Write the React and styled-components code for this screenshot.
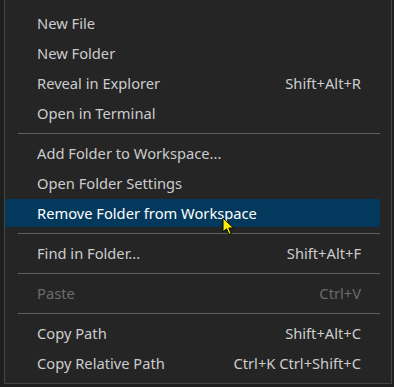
import React from "react";
import styled, { createGlobalStyle } from "styled-components";

const Global = createGlobalStyle`
  html, body { margin: 0; padding: 0; background: #1e1e1e; }
  body { width: 394px; height: 387px; overflow: hidden; }
`;

const Page = styled.div`
  position: relative;
  width: 394px;
  height: 387px;
  padding-left: 4px;
  box-sizing: border-box;
`;

const Menu = styled.div`
  width: 388px;
  height: 384px;
  box-sizing: border-box;
  background: #252526;
  border: 1px solid #454545;
  border-top: none;
  padding: 8px 11px 5px 0;
  font-family: "Noto Sans", sans-serif;
  font-size: 14.7px;
  color: #cccccc;
`;

const List = styled.ul`
  list-style: none;
  margin: 0;
  padding: 0;
  display: flex;
  flex-direction: column;
`;

const Item = styled.li`
  display: flex;
  align-items: center;
  justify-content: space-between;
  height: 28px;
  margin: 1px 0;
  padding: 0 19px 0 32px;
  background: ${(p) => (p.$active ? "#04395e" : "transparent")};
  color: ${(p) => (p.$disabled ? "#6b6b6b" : p.$active ? "#ffffff" : "#cccccc")};
  white-space: nowrap;
`;

const Shortcut = styled.span`
  color: inherit;
`;

const Separator = styled.li`
  height: 10px;
  display: flex;
  align-items: center;
  margin-left: 13px;
  &::after {
    content: "";
    flex: 1;
    height: 1px;
    background: #606060;
  }
`;

const Cursor = styled.svg`
  position: absolute;
  left: 222px;
  top: 217px;
`;

const groups = [
  [
    { label: "New File" },
    { label: "New Folder" },
    { label: "Reveal in Explorer", key: "Shift+Alt+R" },
    { label: "Open in Terminal" },
  ],
  [
    { label: "Add Folder to Workspace..." },
    { label: "Open Folder Settings" },
    { label: "Remove Folder from Workspace", active: true },
  ],
  [{ label: "Find in Folder...", key: "Shift+Alt+F" }],
  [{ label: "Paste", key: "Ctrl+V", disabled: true }],
  [
    { label: "Copy Path", key: "Shift+Alt+C" },
    { label: "Copy Relative Path", key: "Ctrl+K Ctrl+Shift+C" },
  ],
];

export default function App() {
  return (
    <Page>
      <Global />
      <Menu>
        <List>
          {groups.map((g, gi) => (
            <React.Fragment key={gi}>
              {gi > 0 && <Separator />}
              {g.map((it) => (
                <Item key={it.label} $active={it.active} $disabled={it.disabled}>
                  <span>{it.label}</span>
                  {it.key && <Shortcut>{it.key}</Shortcut>}
                </Item>
              ))}
            </React.Fragment>
          ))}
        </List>
      </Menu>
      <Cursor width="14" height="20" viewBox="0 0 14 20">
        <path
          d="M1 1 L1 15 L4.5 11.8 L7 17.5 L9.2 16.5 L6.8 11 L11.5 11 Z"
          fill="#ffee00"
          stroke="#000"
          strokeWidth="1"
          strokeLinejoin="round"
        />
      </Cursor>
    </Page>
  );
}
